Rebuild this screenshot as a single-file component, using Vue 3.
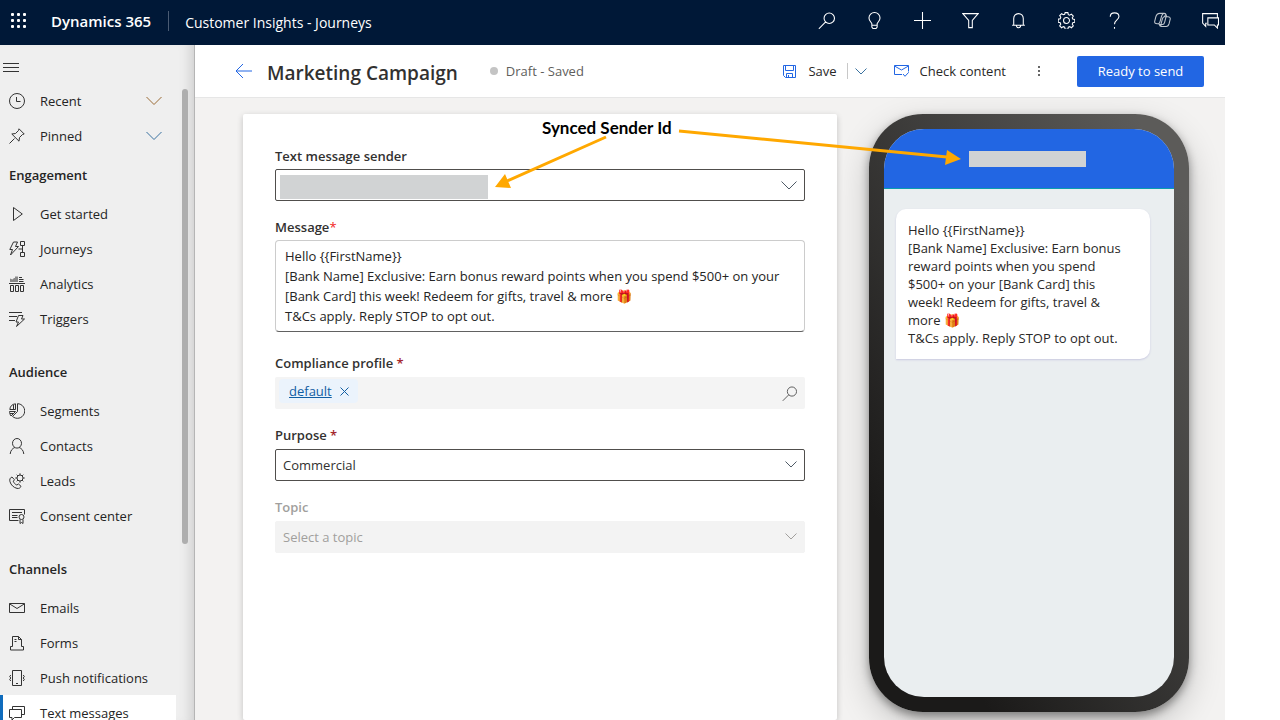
<script setup>
import { ref } from 'vue'

const topIcons = [
  { label: 'Search', d: 'M10.6 1a4.9 4.9 0 1 1 0 9.8a4.9 4.9 0 0 1 0-9.8ZM7.2 9.4L.8 15.8' },
  { label: 'Ideas', d: 'M5.5 12.5V11C5 9.5 2.8 8.400 2.800 5.700a5.200 5.200 0 0 1 10.400 0C13.200 8.400 11 9.500 10.500 11v1.500ZM5.500 12.500v1.700L6.500 15.500h3l1-1.300v-1.700' },
  { label: 'New', d: 'M8 0v16M0 8h16' },
  { label: 'Filter', d: 'M.8 1.500h14.400L9.700 8v6.700H6.300V8Z' },
  { label: 'Notifications', d: 'M3.500 12.500V6a4.500 4.500 0 0 1 9 0v6.500M2 12.500h12M6 12.800a2 2 0 0 0 4 0' },
  { label: 'Settings', d: 'M8 5.200a2.800 2.800 0 1 1 0 5.600a2.800 2.800 0 0 1 0-5.600ZM6.700 .6h2.600l.4 1.900 1.300 .5 1.600-1 1.800 1.800-1 1.600 .5 1.300 1.900 .4v2.600l-1.900 .4-.5 1.300 1 1.600-1.800 1.800-1.600-1-1.300 .5-.4 1.900H6.700l-.4-1.900-1.300-.5-1.600 1-1.800-1.800 1-1.600-.5-1.300-1.900-.4V6.700l1.900-.4 .5-1.300-1-1.600 1.800-1.800 1.600 1 1.300-.5Z' },
  { label: 'Help', d: 'M4 4.500C4 2 5.600 .8 8 .8s4.200 1.300 4.200 3.500C12.200 7.500 8 7.500 8 11.500M8 14v1.800' },
  { label: 'Copilot', soft: true, d: 'M5.500 1.300h4.200c1.200 0 1.600 .8 1.900 1.900l.4 1.300h1c1.800 0 2.600 1 2.200 2.500l-1 4c-.5 1.800-1.200 2.700-2.700 2.700H6.900c-1.200 0-1.600-.7-1.900-1.800L4.600 11H3C1.200 11 .3 10.200 .7 8.500l1-4C2.300 2.400 3.200 1.300 5.500 1.300ZM9 1.500C7.500 2 7.200 3.500 6.800 5L5.600 9.300C5.300 10.400 5 11 4 11M12 4.500H9.600C8.500 4.500 8.200 5.400 7.900 6.500L6.600 11.500c-.3 1.200-.2 1.900 .5 2.200M9.700 4.500L11.500 1.900M5 11.700h3c1.300 0 1.700-.8 2-2L11.300 4.500' },
  { label: 'Feedback', d: 'M4.500 10.500H3.500v3L.6 10.500V1.500h13.900v4M5.500 5.500h10v6.700h-1v2.900l-2.900-2.900H5.500Z' },
]

const navTop = [
  { text: 'Recent', d: 'M8 .5a7.500 7.500 0 1 1 0 15a7.500 7.500 0 0 1 0-15ZM7.500 4v4.500h4', tone: 'amber' },
  { text: 'Pinned', d: 'M.5 15.500L5.500 10.500M10 .8L15.200 6L13.500 6.500L10.500 9.500L10 13.200L2.800 6L6.500 5.500L9.500 2.500Z', tone: 'azure' },
]

const groups = [
  { title: 'Engagement', items: [
    { text: 'Get started', d: 'M4.500 1.500L13.300 8L4.500 14.500Z' },
    { text: 'Journeys', d: 'M4.500 1h4L6.500 5.500h3L1.500 14L3.500 8.500H.8ZM11.500 .5h4v4h-4ZM11.500 11.500h4v4h-4ZM13.500 4.500v7M9.500 8h4' },
    { text: 'Analytics', d: 'M0 7.500h16M1.500 9.500h3v6h-3ZM6.500 9.500h3v6h-3ZM11.500 9.500h3v6h-3ZM10 1.500h3M10 3.500h4.500M10 5.500h4.500', fill: 'M1 6V2.500L3.500 3.500L5 2L6 2V.5H9V6Z' },
    { text: 'Triggers', d: 'M0 1.500h13M0 5.500h8M0 9.500h6M9.500 4.500h4.500L12.500 8h3L7.500 15.500L9.500 11H7Z' },
  ] },
  { title: 'Audience', items: [
    { text: 'Segments', d: 'M8.500 .7a7.300 7.300 0 1 1-5 12.700L8.500 8.500ZM6.500 .8V6.500H.8A6.500 6.500 0 0 1 6.500 .8M4.500 1.800V6.500M.5 8.500h6L2 13C1 11.500 .5 10 .5 8.500M1 10.500h3.500' },
    { text: 'Contacts', d: 'M8 .5a4.500 4.800 0 1 1 0 9.600a4.500 4.800 0 0 1 0-9.600ZM1.200 16C1.500 12.500 3.500 10.300 5.800 9.500M14.800 16C14.500 12.500 12.500 10.300 10.200 9.500' },
    { text: 'Leads', d: 'M3 4C1 4.800 .3 6.500 1 8.800C2 12 4.500 14.500 8 15.400C10 15.800 11.500 14.800 12 13.300L9.500 11L7.800 12C6 11.300 4.800 9.800 4.300 8.200L5.500 6.800ZM11 2a3 3 0 1 1 0 6a3 3 0 0 1 0-6ZM11 .3V2M11 8v1.700M6.300 5H8M14 5h1.700M7.700 1.700l1.200 1.200M14.300 1.700l-1.200 1.200M7.700 8.300l1.200-1.200M14.300 8.300l-1.200-1.200' },
    { text: 'Consent center', d: 'M9.500 12.500H.5V1.500h15v5M3 4.500h10M3 7.500h5.500M3 9.500h5.500M12.500 6.500a2.500 2.500 0 1 1 0 5a2.500 2.500 0 0 1 0-5ZM11 11.500v4l1.500-1l1.500 1v-4' },
  ] },
  { title: 'Channels', items: [
    { text: 'Emails', d: 'M.5 3.500h15v9H.5ZM.5 3.800L8 8.500L15.500 3.800' },
    { text: 'Forms', d: 'M3.500 11.500V1.500h6l3 3v7M9.500 1.500v3h3M5.500 4.500h2M5.500 6.500h2M3.500 11.500H1.500v3.500h13v-3.500h-2' },
    { text: 'Push notifications', d: 'M3.500 .5h9v15h-9ZM7 13.500h2M1.800 5L.7 6.500L1.800 8L.7 9.500L1.800 11M14.200 5L15.300 6.500L14.200 8L15.300 9.500L14.200 11' },
    { text: 'Text messages', d: 'M3.500 4V1.500h12v8h-2.500M.5 4.500h12v8h-7L3 15v-2.500H.5Z', active: true },
  ] },
]

const line = '[Bank Name] Exclusive: Earn bonus reward points when you spend $500+ on your [Bank Card] this week! Redeem for gifts, travel & more '
const gift = String.fromCodePoint(0x1f381)
const greeting = 'Hello {{FirstName}}'
const terms = 'T&Cs apply. Reply STOP to opt out.'
const message = ref(`${greeting}\n${line}${gift}\n${terms}`)
const purpose = ref('Commercial')
</script>

<template>
  <div class="app">
    <header class="topbar">
      <button class="waffle" aria-label="App launcher">
        <svg width="16" height="16" viewBox="0 0 16 16" fill="currentColor">
          <template v-for="y in 3" :key="y">
            <rect v-for="x in 3" :key="x" :x="x * 6 - 6" :y="y * 6 - 6" width="3" height="3" rx="1" />
          </template>
        </svg>
      </button>
      <span class="brand">Dynamics 365</span>
      <span class="area">Customer Insights - Journeys</span>
      <div class="tools">
        <button v-for="i in topIcons" :key="i.label" :aria-label="i.label">
          <svg width="17" height="17" viewBox="0 0 16 16" class="line" :class="{ soft: i.soft }"><path :d="i.d" /></svg>
        </button>
      </div>
    </header>

    <div class="body">
      <nav class="side">
        <button class="burger" aria-label="Toggle navigation"><svg width="16" height="11" viewBox="0 0 16 11" class="line"><path d="M0 1.500h16M0 5.500h16M0 9.500h16" /></svg></button>
        <div class="scroller">
          <div class="list">
            <button v-for="n in navTop" :key="n.text" class="item">
              <svg width="16" height="16" viewBox="0 0 16 16" class="line"><path :d="n.d" /></svg>
              <span>{{ n.text }}</span>
              <svg class="line chev" :class="n.tone" width="16" height="10" viewBox="0 0 16 10"><path d="M.5 1L8 8.500L15.500 1" /></svg>
            </button>
            <section v-for="g in groups" :key="g.title">
              <h2>{{ g.title }}</h2>
              <a v-for="n in g.items" :key="n.text" href="#" class="item" :class="{ active: n.active }">
                <svg width="16" height="16" viewBox="0 0 16 16" class="line"><path :d="n.d" /><path v-if="n.fill" :d="n.fill" class="solid" /></svg>
                <span>{{ n.text }}</span>
              </a>
            </section>
          </div>
          <div class="track"><div class="thumb"></div></div>
        </div>
      </nav>

      <main>
        <div class="command">
          <button class="back" aria-label="Back"><svg width="17" height="16" viewBox="0 0 17 16" class="line"><path d="M1 8h16M8 1L1 8l7 7" /></svg></button>
          <h1>Marketing Campaign</h1>
          <span class="status"><i></i>Draft - Saved</span>
          <div class="actions">
            <button class="save"><svg width="13" height="13" viewBox="0 0 13 13" class="line blue"><path d="M.5 .5h12v12h-10l-2-2ZM2.500 .5v5h8v-5M3.500 12.500v-4h6v4M5.500 10v2.500" /></svg>Save</button>
            <button class="more-save" aria-label="Save options"><svg width="12" height="7" viewBox="0 0 12 7" class="line steel"><path d="M.5 .5L6 6L11.500 .5" /></svg></button>
            <button class="check"><svg width="15" height="12" viewBox="0 0 15 12" class="line blue"><path d="M8 9.500H.5v-9h14v6M.5 1L7.500 5L14.500 1M9 9l2 2.300L14.700 7.300" /></svg>Check content</button>
            <button class="dots" aria-label="More commands"><svg width="3" height="11" viewBox="0 0 3 11" fill="#666"><rect x="1" y="0" width="2" height="2" /><rect x="1" y="4" width="2" height="2" /><rect x="1" y="8" width="2" height="2" /></svg></button>
            <button class="primary">Ready to send</button>
          </div>
        </div>

        <div class="canvas">
          <form class="card" @submit.prevent>
            <div class="fields upper">
              <div class="field">
                <label for="sender">Text message sender</label>
                <div class="control">
                  <select id="sender"><option></option></select>
                  <span class="mask"></span>
                  <svg class="line arrow" width="16" height="9" viewBox="0 0 16 9"><path d="M.5 .5L8 8L15.500 .5" /></svg>
                </div>
              </div>
              <div class="field">
                <label for="message">Message<b class="bright">*</b></label>
                <textarea id="message" v-model="message" rows="4" spellcheck="false"></textarea>
              </div>
            </div>
            <div class="fields">
              <div class="field">
                <label for="profile">Compliance profile <b>*</b></label>
                <div class="lookup">
                  <span class="chip"><a href="#">default</a><button aria-label="Remove default"><svg width="9" height="9" viewBox="0 0 9 9" class="line"><path d="M.5 .5l8 8M8.500 .5l-8 8" /></svg></button></span>
                  <input id="profile" type="text" />
                  <button aria-label="Look up profile"><svg width="15" height="15" viewBox="0 0 16 16" class="line"><path :d="topIcons[0].d" /></svg></button>
                </div>
              </div>
              <div class="field">
                <label for="purpose">Purpose <b>*</b></label>
                <div class="control">
                  <select id="purpose" v-model="purpose"><option>Commercial</option></select>
                  <svg class="line arrow" width="12" height="7" viewBox="0 0 12 7"><path d="M.5 .5L6 6L11.500 .5" /></svg>
                </div>
              </div>
              <div class="field off">
                <label for="topic">Topic</label>
                <div class="control">
                  <select id="topic" disabled><option>Select a topic</option></select>
                  <svg class="line arrow" width="12" height="7" viewBox="0 0 12 7"><path d="M.5 .5L6 6L11.500 .5" /></svg>
                </div>
              </div>
            </div>
          </form>

          <aside class="phone">
            <div class="screen">
              <div class="caller"><span></span></div>
              <p class="bubble">{{ greeting }}<br />{{ line }}{{ gift }}<br />{{ terms }}</p>
            </div>
          </aside>

          <div class="note">
            <strong>Synced Sender Id</strong>
            <svg width="466" height="72" viewBox="0 0 466 72">
              <g stroke="#ffa800" stroke-width="3" fill="none"><path d="M111 19L12 63M184 13L452 39" /></g>
              <g fill="#ffa800"><path d="M0 69L10 56L16 70ZM466 41L452 32L450 47Z" /></g>
            </svg>
          </div>
        </div>
      </main>
    </div>
  </div>
</template>

<style>
body { background: #fff; overflow: hidden; }
</style>

<style scoped>
* { box-sizing: border-box; }
.app { height: 100vh; margin-right: 55px; display: flex; flex-direction: column; overflow: hidden; font: 13px/20px "Open Sans", "Noto Sans", sans-serif; color: #292827; }
button { font: inherit; color: inherit; background: none; border: 0; padding: 0; display: flex; align-items: center; }
a { color: inherit; text-decoration: none; }
h1, h2, p { margin: 0; }
svg { flex: none; display: block; }
.line { fill: none; stroke: currentColor; stroke-width: 1; }
.solid { fill: #888; stroke: none; }
.soft { opacity: .75; }

.topbar { height: 45px; flex: none; display: flex; align-items: center; background: #001837; color: #fff; padding-left: 11px; }
.waffle { margin-right: 24px; padding-bottom: 4px; }
.brand { font-size: 15px; font-weight: 600; padding-right: 17px; border-right: 1px solid #4a5b73; margin-right: 16px; margin-bottom: 4px; }
.area { font-size: 14px; }
.tools { margin-left: auto; display: flex; gap: 20px; padding: 0 1px 4px 0; }
.tools button { width: 28px; height: 28px; justify-content: center; }

.body { flex: 1; min-height: 0; display: flex; }
.side { width: 195px; flex: none; display: flex; flex-direction: column; background: #efefef; border-right: 1px solid #b5b5b5; box-shadow: inset -12px 0 12px -8px #d0d0d0; color: #333; }
.burger { height: 38px; flex: none; padding: 7px 0 0 3px; }
.scroller { flex: 1; min-height: 0; display: flex; overflow: hidden; }
.list { width: 176px; }
.item { width: 100%; height: 35px; display: flex; align-items: center; gap: 15px; padding-left: 9px; color: #333; }
.item span { color: #242424; }
.item .chev { margin-left: auto; margin-right: 14px; }
.amber { color: #9a6a35; }
.azure { color: #39719f; }
.active { background: #fff; border-left: 3px solid #0f6cbd; padding-left: 6px; }
h2 { height: 43px; line-height: 45px; font-size: 13px; font-weight: 600; padding-left: 9px; color: #242424; }
section + section { margin-top: 14px; }
.track { padding: 6px 0 0 6px; }
.thumb { width: 6px; height: 455px; border-radius: 3px; background: #aeaeae; }

main { flex: 1; min-width: 0; display: flex; flex-direction: column; }
.command { height: 53px; flex: none; display: flex; align-items: center; background: #fff; border-bottom: 1px solid #e6e6e6; padding: 0 21px 0 40px; }
.back { color: #2266e3; margin-right: 15px; }
h1 { font-size: 19px; font-weight: 600; line-height: 28px; padding-top: 4px; color: #323130; white-space: nowrap; }
.status { display: flex; align-items: center; gap: 8px; margin-left: 32px; color: #605e5c; white-space: nowrap; }
.status i { width: 8px; height: 8px; border-radius: 50%; background: #c4c4c4; }
.actions { margin-left: auto; display: flex; align-items: center; white-space: nowrap; }
.blue { color: #2266e3; }
.steel { color: #39719f; }
.save { gap: 12px; }
.more-save { height: 16px; margin-left: 10px; padding: 0 27px 0 7px; border-left: 1px solid #c8c8c8; }
.check { gap: 11px; }
.dots { padding: 0 37px 0 31px; }
.primary { width: 127px; height: 31px; justify-content: center; background: #2266e3; color: #fff; border-radius: 2px; }

.canvas { position: relative; flex: 1; min-height: 0; display: flex; align-items: flex-start; gap: 32px; padding: 16px 36px 0 48px; background: #f3f2f1; overflow: hidden; }
.card { flex: 1; min-width: 0; min-height: 100%; padding: 32px; display: flex; flex-direction: column; gap: 21px; background: #fff; border-radius: 2px; box-shadow: 0 2px 6px rgba(0, 0, 0, .2); }
.fields { display: flex; flex-direction: column; gap: 16px; }
.field { display: flex; flex-direction: column; gap: 4px; }
.upper .field { gap: 3px; }
label { font-weight: 600; color: #323130; }
label b { color: #a4262c; font-weight: 600; }
label .bright { color: #f21b1b; font-weight: 400; }
.control { position: relative; height: 32px; }
select { appearance: none; width: 100%; height: 32px; font: inherit; color: #323130; background: #fff; border: 1px solid #504e4c; border-radius: 2px; padding: 0 32px 0 7px; opacity: 1; }
.arrow { position: absolute; right: 8px; top: 12px; color: #4f5b66; pointer-events: none; }
.mask { position: absolute; left: 5px; top: 6px; width: 208px; height: 24px; background: #d1d3d4; }
textarea { display: block; width: 100%; height: 92px; resize: none; overflow: hidden; font: inherit; color: #242424; background: #fff; border: 1px solid #ccc; border-bottom-color: #616161; border-radius: 4px; padding: 5px 9px; outline: 0; }
.lookup { height: 32px; display: flex; align-items: center; background: #f4f4f4; border-radius: 2px; padding: 0 8px 0 4px; color: #555; }
.lookup input { flex: 1; min-width: 0; border: 0; background: none; outline: 0; }
.chip { display: flex; align-items: center; gap: 8px; height: 24px; margin-bottom: 4px; padding: 0 9px 0 10px; border-radius: 4px; background: #ebf3fc; color: #115ea3; }
.chip a { text-decoration: underline; }
.off label, .off select, .off .arrow { color: #a19f9d; }
.off select { background: #f3f3f3; border-color: #f3f3f3; }

.phone { width: 320px; flex: none; padding: 15px; border-radius: 54px; background: linear-gradient(60deg, #1b1a19 18%, #5c5b59 92%); box-shadow: 0 4px 10px rgba(0, 0, 0, .4), 0 12px 34px rgba(0, 0, 0, .2); }
.screen { height: 568px; border-radius: 40px; overflow: hidden; background: #eaeef0; }
.caller { height: 60px; display: flex; align-items: center; justify-content: center; background: #2266e3; border-bottom: 1px solid #0d9cae; }
.caller span { width: 117px; height: 16px; margin-right: 4px; background: #d1d3d4; }
.bubble { width: 254px; margin: 20px 0 0 12px; padding: 12px 20px 12px 12px; line-height: 18px; background: #fff; border-radius: 10px 10px 10px 0; box-shadow: 0 1px 2px #c9c9e0; }
.note { position: absolute; left: 300px; top: 20px; color: #000; pointer-events: none; }
.note strong { position: absolute; left: 47px; top: 0; font: 700 17px/20px Lato, sans-serif; white-space: nowrap; }
</style>
